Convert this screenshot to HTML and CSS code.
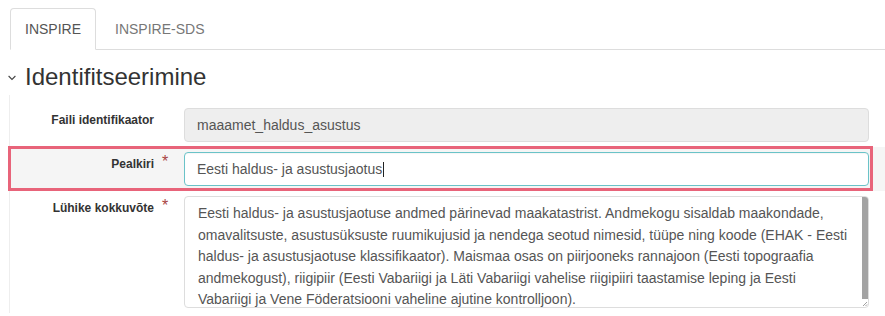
FILE: index.html
```html
<!DOCTYPE html>
<html lang="et">
<head>
    <meta charset="UTF-8">
    <meta name="viewport" content="width=device-width, initial-scale=1.0">
    <title>Metaandmed – Identifitseerimine</title>
    <link rel="stylesheet" href="styles.css">
</head>
<body>
<div class="page">
    <ul class="tabs">
        <li class="tab active">INSPIRE</li>
        <li class="tab">INSPIRE-SDS</li>
    </ul>

    <h2 class="section-title">
        <svg class="chevron" width="8" height="6" viewBox="0 0 8 6"><polyline points="0.6,1 4,4.4 7.4,1" fill="none" stroke="#444" stroke-width="1.1"/></svg>
        <span>Identifitseerimine</span>
    </h2>

    <div class="fieldset">
        <div class="form-row">
            <label class="control-label">Faili identifikaator</label>
            <span class="req"></span>
            <div class="form-control readonly">maaamet_haldus_asustus</div>
        </div>

        <div class="form-row hovered">
            <label class="control-label">Pealkiri</label>
            <span class="req">*</span>
            <div class="form-control focused">Eesti haldus- ja asustusjaotus<span class="caret"></span></div>
            <div class="annotation"></div>
        </div>

        <div class="form-row">
            <label class="control-label">Lühike kokkuvõte</label>
            <span class="req">*</span>
            <div class="form-control textarea">
                <div class="ta-body">
                    Eesti haldus- ja asustusjaotuse andmed pärinevad maakatastrist. Andmekogu sisaldab maakondade,<br>
                    omavalitsuste, asustusüksuste ruumikujusid ja nendega seotud nimesid, tüüpe ning koode (EHAK - Eesti<br>
                    haldus- ja asustusjaotuse klassifikaator). Maismaa osas on piirjooneks rannajoon (Eesti topograafia<br>
                    andmekogust), riigipiir (Eesti Vabariigi ja Läti Vabariigi vahelise riigipiiri taastamise leping ja Eesti<br>
                    Vabariigi ja Vene Föderatsiooni vaheline ajutine kontrolljoon).
                </div>
                <div class="ta-scroll">
                    <div class="thumb"></div>
                    <svg class="grip" width="6" height="7" viewBox="0 0 6 7"><line x1="1" y1="6" x2="5" y2="2" stroke="#888" stroke-width="0.8"/><line x1="3.5" y1="6" x2="5" y2="4.5" stroke="#888" stroke-width="0.8"/></svg>
                </div>
            </div>
        </div>
    </div>
</div>
</body>
</html>
```

FILE: styles.css
```css
body {
    margin: 0;
    font-family: "Liberation Sans", Arial, sans-serif;
    font-size: 14px;
    color: #333;
    background: #fff;
}
.page {
    padding: 8px 0 0 8px;
    overflow: hidden;
}
.tabs {
    display: flex;
    list-style: none;
    margin: 0 0 0 2px;
    padding: 0;
    border-bottom: 1px solid #ddd;
}
.tab {
    margin-bottom: -1px;
    margin-left: 3px;
    padding: 10px 15px;
    line-height: 20px;
    color: #777;
    border: 1px solid transparent;
    border-radius: 4px 4px 0 0;
}
.tab.active {
    margin-left: 0;
    padding: 10px 14px;
    color: #555;
    background: #fff;
    border-color: #ddd #ddd transparent;
}
.section-title {
    display: flex;
    align-items: center;
    margin: 14px 0 0;
    font-size: 24px;
    font-weight: normal;
    line-height: 26px;
    color: #333;
}
.chevron {
    margin-right: 9px;
    margin-top: 1px;
}
.fieldset {
    margin: 5px 0 0 1px;
    padding-top: 8px;
    border-left: 1px solid #eee;
}
.form-row {
    position: relative;
    display: grid;
    grid-template-columns: 144px 30px 1fr;
    align-items: start;
    padding: 5px 16px 5px 0;
}
.form-row.hovered {
    background: #f5f5f5;
}
.control-label {
    padding-top: 4px;
    font-size: 12px;
    font-weight: bold;
    line-height: 16px;
    text-align: right;
}
.req {
    padding: 2px 0 0 8px;
    font-size: 16px;
    line-height: 16px;
    color: #a94442;
}
.form-control {
    box-sizing: border-box;
    height: 34px;
    padding: 7px 12px;
    font-size: 14px;
    line-height: 18px;
    color: #555;
    background: #fff;
    border: 1px solid #ddd;
    border-radius: 4px;
    white-space: nowrap;
}
.form-control.readonly {
    background: #eee;
}
.form-control.focused {
    border-color: #6ac3c8;
    box-shadow: inset 0 1px 1px rgba(0, 0, 0, .04);
}
.caret {
    display: inline-block;
    width: 1px;
    height: 15px;
    margin-left: 1px;
    vertical-align: -3px;
    background: #222;
}
.form-control.textarea {
    display: flex;
    height: 112px;
    padding: 0;
    overflow: hidden;
}
.ta-body {
    flex: 1;
    padding: 6px 12px 0 13px;
    line-height: 21.5px;
    overflow: hidden;
}
.ta-scroll {
    display: flex;
    flex-direction: column;
    width: 6px;
}
.thumb {
    flex: 1;
    background: #a3a3a3;
}
.grip {
    display: block;
    margin-top: 1px;
}
.annotation {
    position: absolute;
    top: -1px;
    bottom: 0;
    left: -2px;
    right: 12px;
    border: 3px solid #e8647a;
    pointer-events: none;
}
```
